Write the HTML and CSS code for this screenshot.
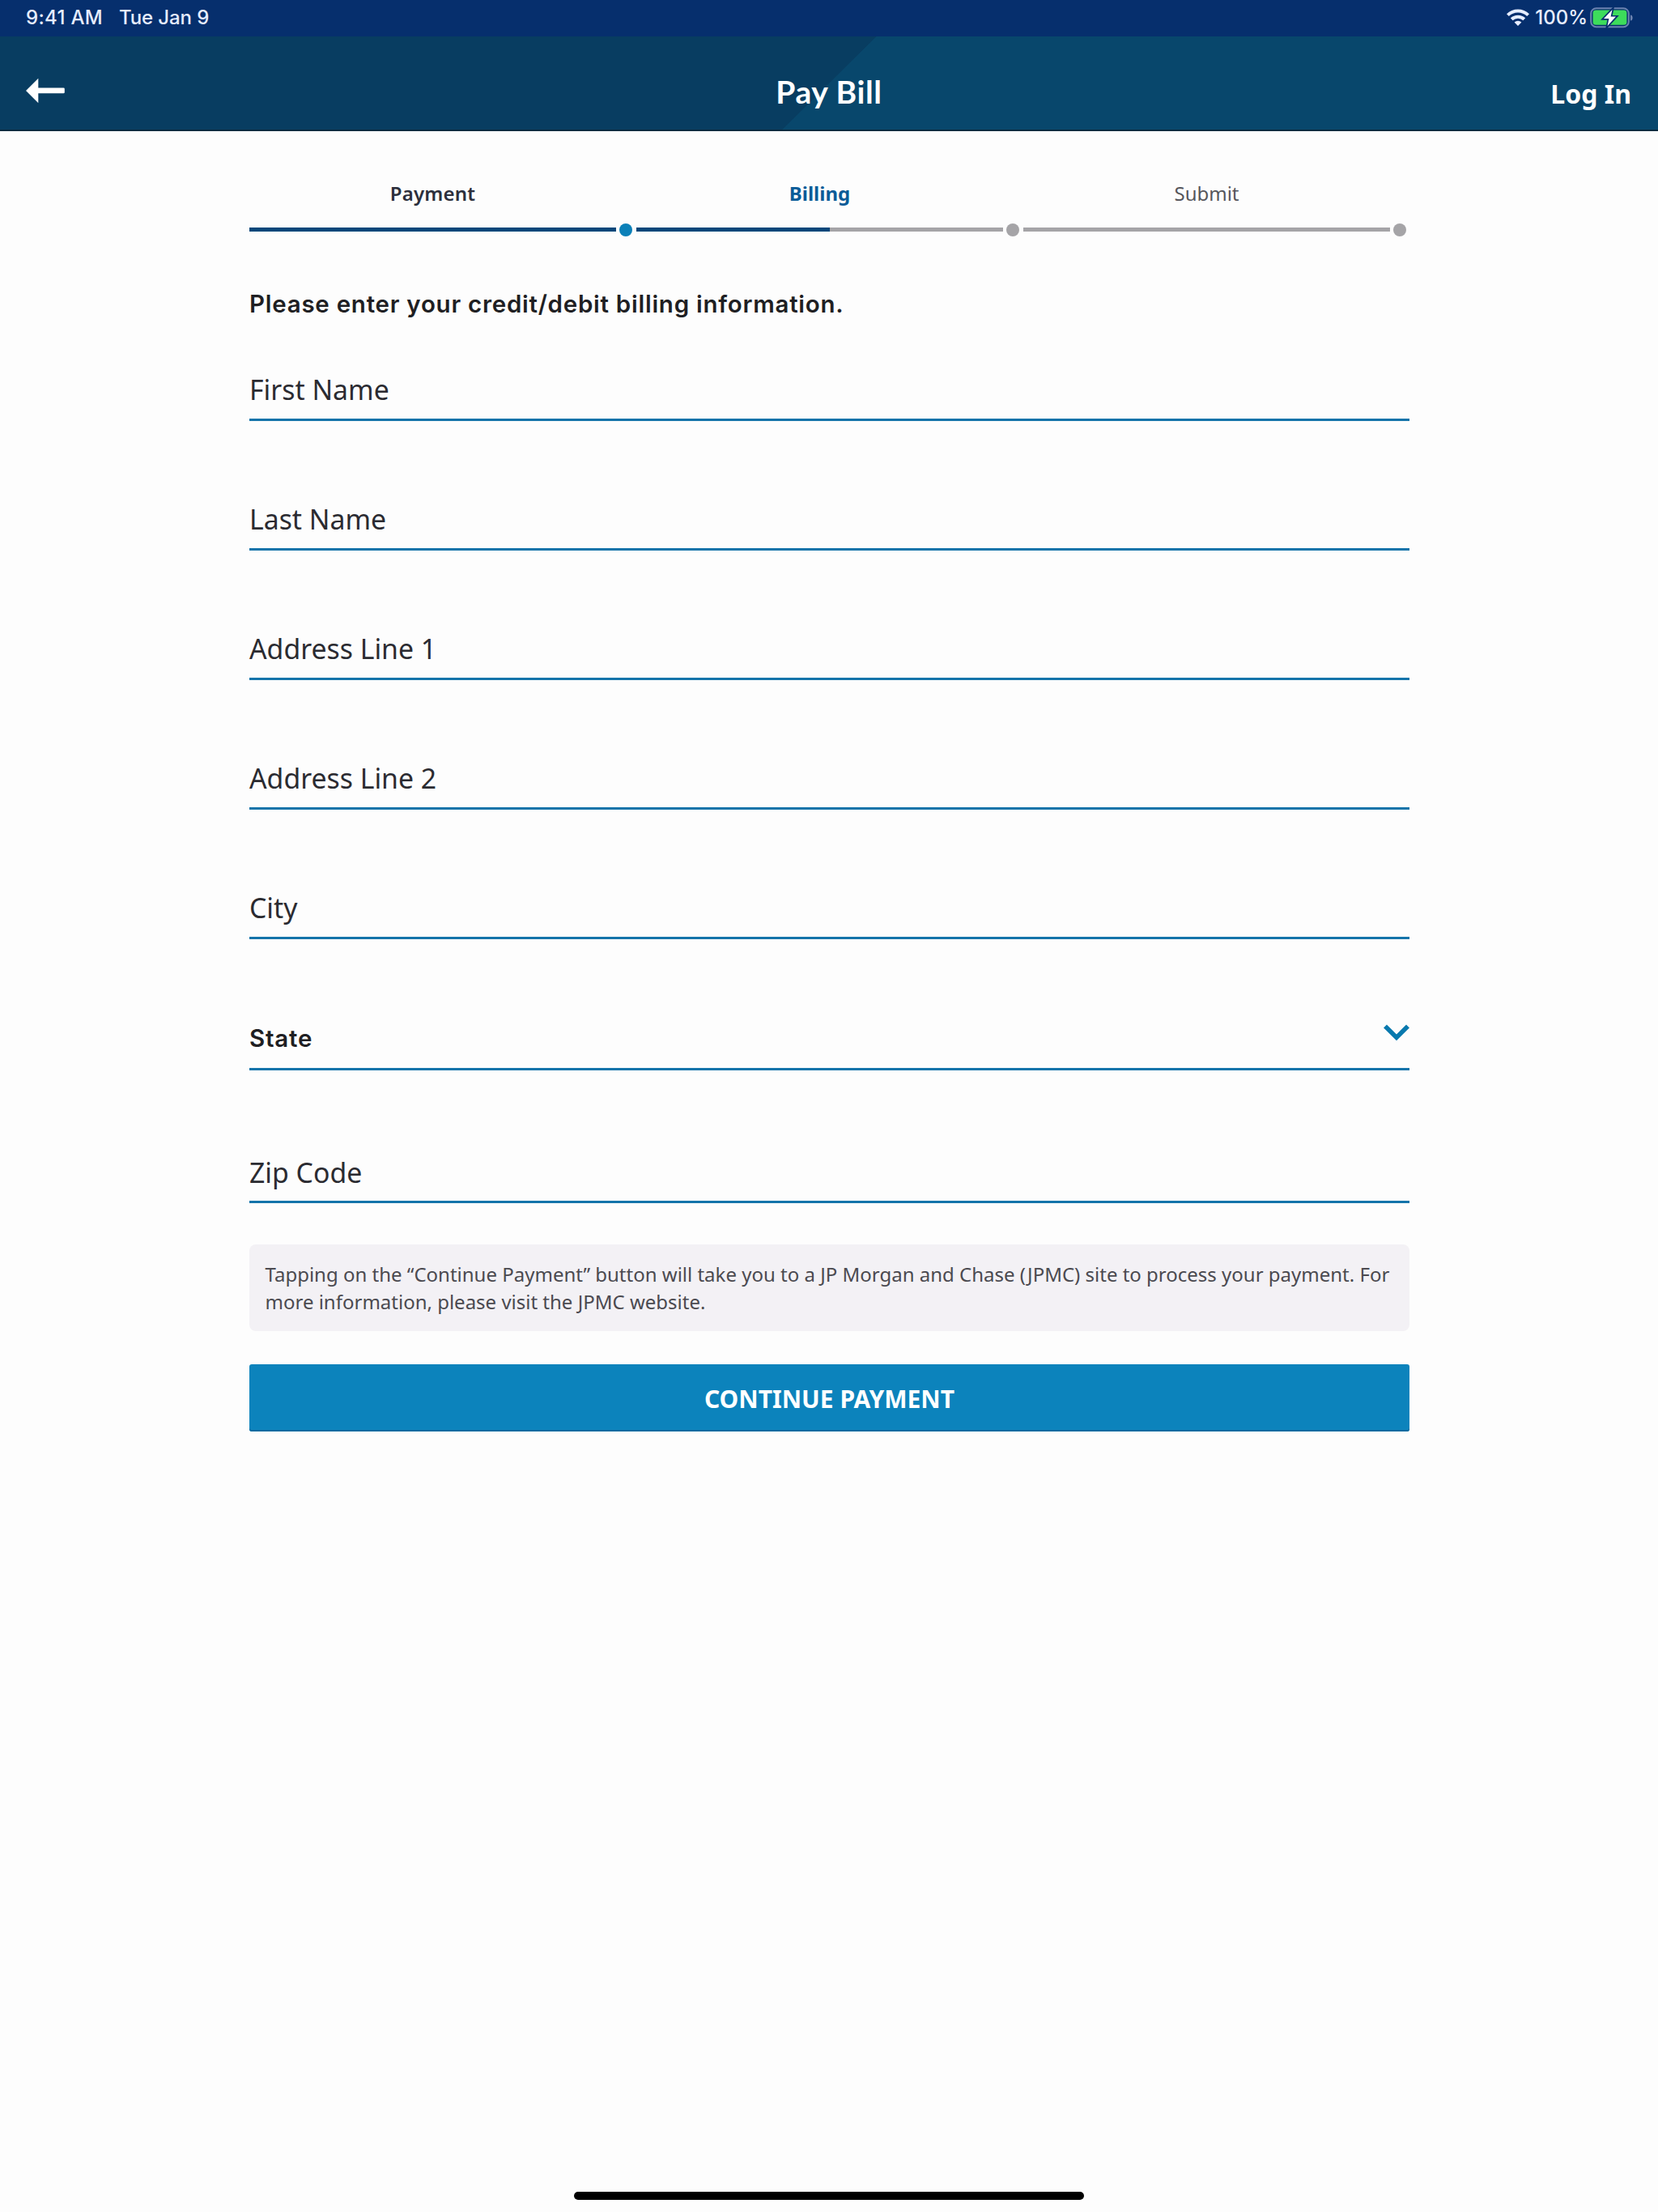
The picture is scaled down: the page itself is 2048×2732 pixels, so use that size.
FILE: index.html
```html
<!DOCTYPE html>
<html lang="en">
<head>
<meta charset="utf-8">
<title>Pay Bill</title>
<link rel="stylesheet" href="styles.css">
</head>
<body>
<div class="status">
  <div class="status-left"><span class="time">9:41 AM</span><span class="date">Tue Jan 9</span></div>
  <div class="status-right">
    <svg class="wifi" viewBox="0 0 28 21" width="28" height="21"><g fill="none" stroke="#e6edff" stroke-width="4"><path d="M1.4 7.6a18 18 0 0 1 25.2 0"/><path d="M6.2 12.8a11.2 11.2 0 0 1 15.6 0"/></g><path d="M14 21l-4.4-4.4a6.4 6.4 0 0 1 8.8 0z" fill="#e6edff"/></svg>
    <span class="percent">100%</span>
    <svg class="battery" viewBox="0 0 54 26" width="54" height="26"><rect x="1.2" y="1.2" width="46.6" height="23" rx="6.5" fill="none" stroke="#6c83b0" stroke-width="2"/><path d="M50 9.5c3.5 0 3.5 7 0 7z" fill="#6c83b0"/><rect x="3.6" y="3.6" width="41.8" height="18.2" rx="3.6" fill="#3ddc5b"/><path d="M27.5 3L17 14h6.4L21.6 23 32 11.6h-6.4z" fill="#fff" stroke="#062f6d" stroke-width="3.4" paint-order="stroke"/></svg>
  </div>
</div>
<header class="header">
  <svg class="back" viewBox="0 0 48 32" width="48" height="32"><path d="M0 16L15.3 .8V12.4H46.5Q47.8 12.4 47.8 13.7V18Q47.8 19.3 46.5 19.3H15.3V31.2z" fill="#fff"/></svg>
  <h1 class="title">Pay Bill</h1>
  <span class="login">Log In</span>
</header>
<main class="content">
  <div class="steps">
    <div class="step done"><span class="step-label">Payment</span><i class="line"></i><i class="dot"></i></div>
    <div class="step current"><span class="step-label">Billing</span><i class="line"></i><i class="dot"></i></div>
    <div class="step"><span class="step-label">Submit</span><i class="line"></i><i class="dot"></i></div>
  </div>
  <h2 class="prompt">Please enter your credit/debit billing information.</h2>
  <div class="field">First Name</div>
  <div class="field">Last Name</div>
  <div class="field">Address Line 1</div>
  <div class="field">Address Line 2</div>
  <div class="field">City</div>
  <div class="field select"><span>State</span><svg class="chevron" viewBox="0 0 34 22" width="34" height="22"><path d="M3 3.4L17 17.4 31 3.4" fill="none" stroke="#0879ae" stroke-width="5.6"/></svg></div>
  <div class="field zip">Zip Code</div>
  <p class="note">Tapping on the “Continue Payment” button will take you to a JP Morgan and Chase (JPMC) site to process your payment. For<br>more information, please visit the JPMC website.</p>
  <button class="continue">CONTINUE PAYMENT</button>
</main>
<div class="home"></div>
</body>
</html>
```
FILE: styles.css
```css
* { box-sizing: border-box; }
body {
  margin: 0;
  height: 2732px;
  display: flex;
  flex-direction: column;
  background: #fdfdfd;
  font-family: "Noto Sans", sans-serif;
  color: #2b2b31;
}
.status {
  height: 45px;
  flex: none;
  display: flex;
  justify-content: space-between;
  padding: 0 30px 0 32px;
  background: #062f6d;
  color: #e6edff;
  font: 500 24px/43px Inter, sans-serif;
}
.status-left { display: flex; gap: 20px; }
.time { letter-spacing: 0.3px; }
.date { letter-spacing: -0.1px; }
.status-right { display: flex; align-items: center; height: 43px; }
.percent { margin: 0 3px 0 7px; }
.header {
  height: 117px;
  flex: none;
  display: grid;
  grid-template-columns: 1fr auto 1fr;
  align-items: start;
  padding: 0 33px 0 32px;
  border-bottom: 2px solid #0b2b3f;
  background: linear-gradient(135.3deg, #083d61 0 50%, #08476c 50.05%);
  color: #fff;
}
.back { margin-top: 51px; }
.title { margin: 40px 0 0; padding-left: 1px; font: 700 39px/56px Lato, sans-serif; letter-spacing: 0.6px; }
.login { margin-top: 48px; justify-self: end; font-size: 32px; font-weight: 700; line-height: 46px; }
.content { width: 1433px; margin: 59.5px 0 0 308px; }
.steps { display: grid; grid-template-columns: repeat(3, 478px); }
.step { display: grid; grid-template-columns: 453px 16px; column-gap: 4px; row-gap: 20px; align-items: center; }
.step-label { grid-column: 1 / 2; justify-self: center; font-size: 24px; line-height: 34px; color: #56565c; }
.line { grid-row: 2; height: 5px; background: #a5a4a7; }
.dot { grid-row: 2; grid-column: 2; width: 16px; height: 16px; border-radius: 50%; background: #a5a4a7; }
.done .step-label { font-weight: 600; color: #2c2f3c; letter-spacing: 0.2px; }
.done .line { background: #05477a; }
.done .dot { background: #0b80b8; }
.current .step-label { font-weight: 700; color: #0a5c98; }
.current .line { background: linear-gradient(90deg, #05477a 239px, #a5a4a7 239px); }
.prompt { margin: 63.5px 0 62.5px; font: 600 29.5px/40px Inter, sans-serif; letter-spacing: 0.74px; color: #1f1f23; white-space: nowrap; }
.field { height: 62px; margin-bottom: 98.2px; border-bottom: 3px solid #1474aa; font-size: 33.8px; line-height: 46px; }
.select { height: 64px; margin-bottom: 102px; display: flex; justify-content: space-between; font: 600 29.5px/48px Inter, sans-serif; letter-spacing: 0.8px; color: #1f1f23; }
.chevron { margin: 6px -1px 0 0; }
.zip { margin-bottom: 51px; line-height: 48px; }
.note { margin: 0 0 41px; height: 107px; padding: 19.5px; border-radius: 8px; background: #f3f1f5; font-size: 24px; line-height: 34px; color: #4b4a50; white-space: nowrap; }
.continue { display: block; width: 100%; height: 83px; padding: 2px 0 0; border: 0; border-radius: 3px; background: #0c83bc; box-shadow: inset 0 -2px #086aa0; color: #fff; font: 700 30px/81px "Noto Sans", sans-serif; }
.home { width: 630px; height: 10px; margin: auto auto 15.5px; border-radius: 5px; background: #000; flex: none; }
```
